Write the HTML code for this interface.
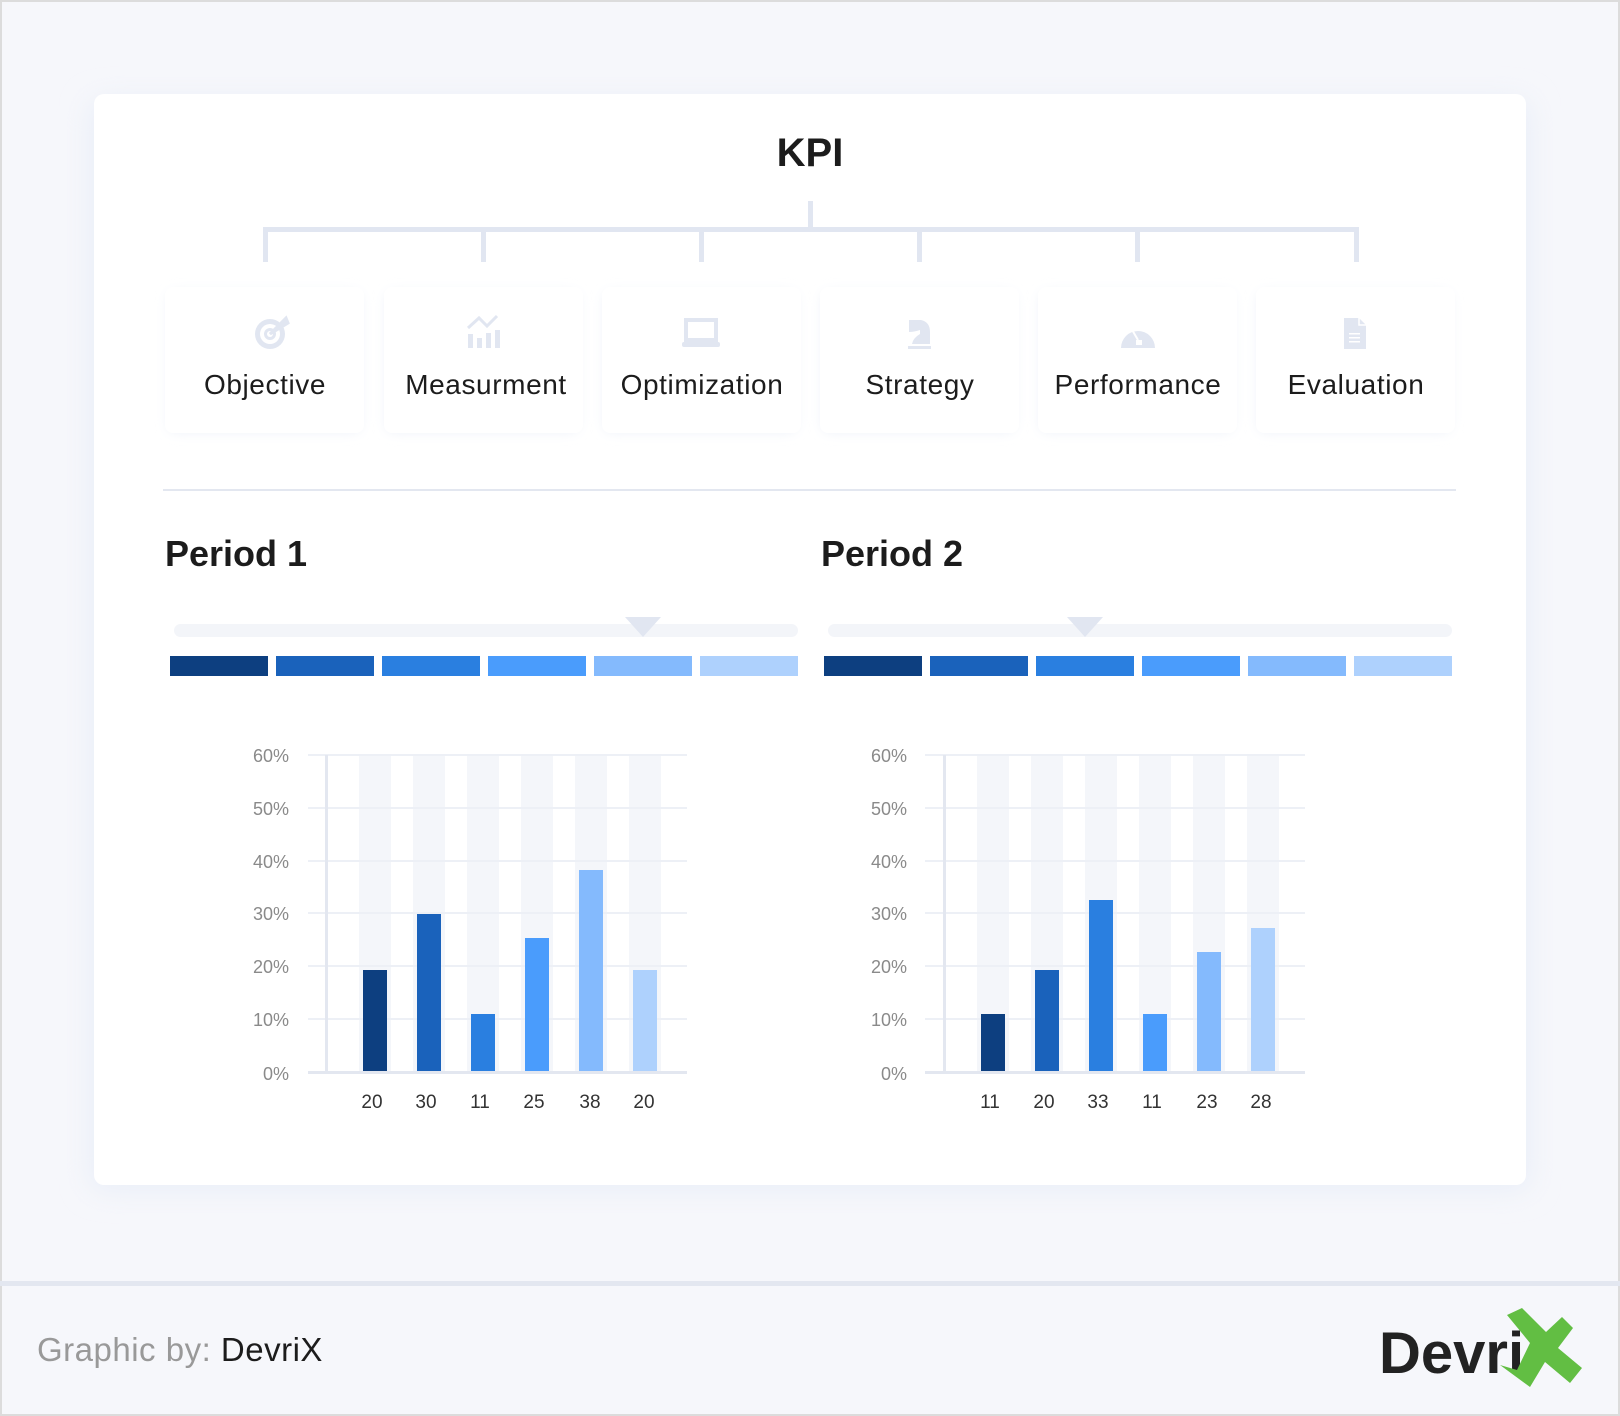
<!DOCTYPE html>
<html><head><meta charset="utf-8"><style>
html,body{margin:0;padding:0;background:#f6f7fb}
svg{display:block}
text{font-family:"Liberation Sans",sans-serif}
</style></head><body>
<svg width="1620" height="1416" viewBox="0 0 1620 1416" xmlns="http://www.w3.org/2000/svg">
<defs>
<filter id="sh" x="-10%" y="-10%" width="120%" height="120%"><feGaussianBlur stdDeviation="14"/></filter>
<filter id="sh2" x="-20%" y="-20%" width="140%" height="140%"><feGaussianBlur stdDeviation="6"/></filter>
</defs>
<rect x="0" y="0" width="1620" height="1416" fill="#f6f7fb"/>
<rect x="1" y="1" width="1618" height="1414" fill="none" stroke="#dcdcdc" stroke-width="2"/>
<rect x="0" y="1281" width="1620" height="5" fill="#e3e7f0"/>
<rect x="90" y="100" width="1440" height="1090" rx="14" fill="#e9eef8" filter="url(#sh)"/>
<rect x="94" y="94" width="1432" height="1091" rx="10" fill="#fff"/>
<text x="810" y="166" font-size="40" font-weight="bold" text-anchor="middle" fill="#1c1c1c">KPI</text>
<g fill="#e1e6f1">
<rect x="808" y="201" width="5" height="29"/>
<rect x="263" y="227" width="1096" height="5"/>
<rect x="263" y="227" width="5" height="35"/>
<rect x="481" y="227" width="5" height="35"/>
<rect x="699" y="227" width="5" height="35"/>
<rect x="917" y="227" width="5" height="35"/>
<rect x="1135" y="227" width="5" height="35"/>
<rect x="1354" y="227" width="5" height="35"/>
</g>
<g>
<rect x="168" y="292" width="193" height="140" rx="8" fill="#eef2f9" filter="url(#sh2)"/>
<rect x="386" y="292" width="193" height="140" rx="8" fill="#eef2f9" filter="url(#sh2)"/>
<rect x="604" y="292" width="193" height="140" rx="8" fill="#eef2f9" filter="url(#sh2)"/>
<rect x="822" y="292" width="193" height="140" rx="8" fill="#eef2f9" filter="url(#sh2)"/>
<rect x="1040" y="292" width="193" height="140" rx="8" fill="#eef2f9" filter="url(#sh2)"/>
<rect x="1258" y="292" width="193" height="140" rx="8" fill="#eef2f9" filter="url(#sh2)"/>
</g>
<g fill="#fff">
<rect x="165" y="287" width="199" height="146" rx="8"/>
<rect x="384" y="287" width="199" height="146" rx="8"/>
<rect x="602" y="287" width="199" height="146" rx="8"/>
<rect x="820" y="287" width="199" height="146" rx="8"/>
<rect x="1038" y="287" width="199" height="146" rx="8"/>
<rect x="1256" y="287" width="199" height="146" rx="8"/>
</g>
<g fill="#e1e6f1">
<circle cx="270" cy="334" r="15"/><circle cx="270" cy="334" r="10" fill="#fff"/><circle cx="270" cy="334" r="6"/><circle cx="270" cy="334" r="3" fill="#fff"/>
<path d="M270 334 L282 322 L286 318 L288 323 Z" stroke="#e1e6f1" stroke-width="3"/>
<rect x="468" y="334" width="5" height="14"/><rect x="477" y="338" width="5" height="10"/><rect x="486" y="333" width="5" height="15"/><rect x="495" y="330" width="5" height="18"/>
<path d="M468 328 L479 318 L487 326 L497 316" fill="none" stroke="#e1e6f1" stroke-width="3"/>
<rect x="686" y="320" width="30" height="20" fill="none" stroke="#e1e6f1" stroke-width="4"/>
<rect x="682" y="342" width="38" height="5" rx="2"/>
<path d="M909 320 L921 320 Q930 322 930 332 L930 344 L912 344 Q913 338 920 334 L920 330 Q914 332 909 332 Z"/>
<rect x="908" y="346" width="23" height="3"/>
<path d="M1121 348 A17 17 0 1 1 1155 348 Z"/>
<path d="M1131 328 L1138 340" stroke="#fff" stroke-width="2"/><rect x="1136" y="340" width="6" height="5" fill="#fff"/>
<path d="M1344 318 L1359 318 L1366 325 L1366 349 L1344 349 Z"/>
<path d="M1359 318 L1359 325 L1366 325" fill="none" stroke="#fff" stroke-width="1.5"/>
<rect x="1349" y="333" width="11" height="1.5" fill="#fff"/><rect x="1349" y="337" width="11" height="1.5" fill="#fff"/><rect x="1349" y="341" width="11" height="1.5" fill="#fff"/>
</g>
<g font-size="28" fill="#1c1c1c" text-anchor="middle" letter-spacing="0.6">
<text x="265" y="394">Objective</text>
<text x="486" y="394">Measurment</text>
<text x="702" y="394">Optimization</text>
<text x="920" y="394">Strategy</text>
<text x="1138" y="394">Performance</text>
<text x="1356" y="394">Evaluation</text>
</g>
<rect x="163" y="489" width="1293" height="2" fill="#e3e7f0"/>
<g font-size="36" font-weight="bold" fill="#1c1c1c">
<text x="165" y="566">Period 1</text>
<text x="821" y="566">Period 2</text>
</g>
<rect x="174" y="624" width="624" height="13" rx="6.5" fill="#f3f5f9"/>
<path d="M625 617 L661 617 L643 637 Z" fill="#e1e6f1"/>
<rect x="828" y="624" width="624" height="13" rx="6.5" fill="#f3f5f9"/>
<path d="M1067 617 L1103 617 L1085 637 Z" fill="#e1e6f1"/>
<g>
<rect x="170" y="656" width="98" height="20" fill="#0d3f80"/>
<rect x="276" y="656" width="98" height="20" fill="#1a62bb"/>
<rect x="382" y="656" width="98" height="20" fill="#2a7fe0"/>
<rect x="488" y="656" width="98" height="20" fill="#4a9cfc"/>
<rect x="594" y="656" width="98" height="20" fill="#84bafd"/>
<rect x="700" y="656" width="98" height="20" fill="#aed1fd"/>
<rect x="824" y="656" width="98" height="20" fill="#0d3f80"/>
<rect x="930" y="656" width="98" height="20" fill="#1a62bb"/>
<rect x="1036" y="656" width="98" height="20" fill="#2a7fe0"/>
<rect x="1142" y="656" width="98" height="20" fill="#4a9cfc"/>
<rect x="1248" y="656" width="98" height="20" fill="#84bafd"/>
<rect x="1354" y="656" width="98" height="20" fill="#aed1fd"/>
</g>
<g fill="#f4f6fa">
<rect x="359" y="755" width="32" height="317"/><rect x="413" y="755" width="32" height="317"/><rect x="467" y="755" width="32" height="317"/><rect x="521" y="755" width="32" height="317"/><rect x="575" y="755" width="32" height="317"/><rect x="629" y="755" width="32" height="317"/>
<rect x="977" y="755" width="32" height="317"/><rect x="1031" y="755" width="32" height="317"/><rect x="1085" y="755" width="32" height="317"/><rect x="1139" y="755" width="32" height="317"/><rect x="1193" y="755" width="32" height="317"/><rect x="1247" y="755" width="32" height="317"/>
</g>
<g stroke="#edf0f6" stroke-width="2">
<path d="M308 755H687M308 808H687M308 861H687M308 913H687M308 966H687M308 1019H687"/>
<path d="M925 755H1305M925 808H1305M925 861H1305M925 913H1305M925 966H1305M925 1019H1305"/>
</g>
<rect x="325" y="755" width="3" height="318" fill="#e3e7f0"/>
<rect x="308" y="1071" width="379" height="3" fill="#e3e7f0"/>
<rect x="943" y="755" width="3" height="318" fill="#e3e7f0"/>
<rect x="925" y="1071" width="380" height="3" fill="#e3e7f0"/>
<g>
<rect x="363" y="970" width="24" height="101" fill="#0d3f80"/>
<rect x="417" y="914" width="24" height="157" fill="#1a62bb"/>
<rect x="471" y="1014" width="24" height="57" fill="#2a7fe0"/>
<rect x="525" y="938" width="24" height="133" fill="#4a9cfc"/>
<rect x="579" y="870" width="24" height="201" fill="#84bafd"/>
<rect x="633" y="970" width="24" height="101" fill="#aed1fd"/>
<rect x="981" y="1014" width="24" height="57" fill="#0d3f80"/>
<rect x="1035" y="970" width="24" height="101" fill="#1a62bb"/>
<rect x="1089" y="900" width="24" height="171" fill="#2a7fe0"/>
<rect x="1143" y="1014" width="24" height="57" fill="#4a9cfc"/>
<rect x="1197" y="952" width="24" height="119" fill="#84bafd"/>
<rect x="1251" y="928" width="24" height="143" fill="#aed1fd"/>
</g>
<g font-size="18" fill="#8a8a8a" text-anchor="end">
<text x="289" y="762">60%</text><text x="289" y="815">50%</text><text x="289" y="868">40%</text><text x="289" y="920">30%</text><text x="289" y="973">20%</text><text x="289" y="1026">10%</text><text x="289" y="1080">0%</text>
<text x="907" y="762">60%</text><text x="907" y="815">50%</text><text x="907" y="868">40%</text><text x="907" y="920">30%</text><text x="907" y="973">20%</text><text x="907" y="1026">10%</text><text x="907" y="1080">0%</text>
</g>
<g font-size="19" fill="#333" text-anchor="middle">
<text x="372" y="1108">20</text><text x="426" y="1108">30</text><text x="480" y="1108">11</text><text x="534" y="1108">25</text><text x="590" y="1108">38</text><text x="644" y="1108">20</text>
<text x="990" y="1108">11</text><text x="1044" y="1108">20</text><text x="1098" y="1108">33</text><text x="1152" y="1108">11</text><text x="1207" y="1108">23</text><text x="1261" y="1108">28</text>
</g>
<text x="37" y="1361" font-size="33" letter-spacing="0.5"><tspan fill="#999">Graphic by: </tspan><tspan fill="#1c1c1c">DevriX</tspan></text>
<text x="1379" y="1373" font-size="58" font-weight="bold" fill="#222">Devri</text>
<path d="M1507 1315 L1522 1308 L1546 1332 L1562 1317 L1573 1328 L1558 1348 L1582 1368 L1570 1383 L1545 1362 L1530 1387 L1500 1365 L1517 1370 L1530 1343 Z" fill="#62be43"/>
</svg>
</body></html>
